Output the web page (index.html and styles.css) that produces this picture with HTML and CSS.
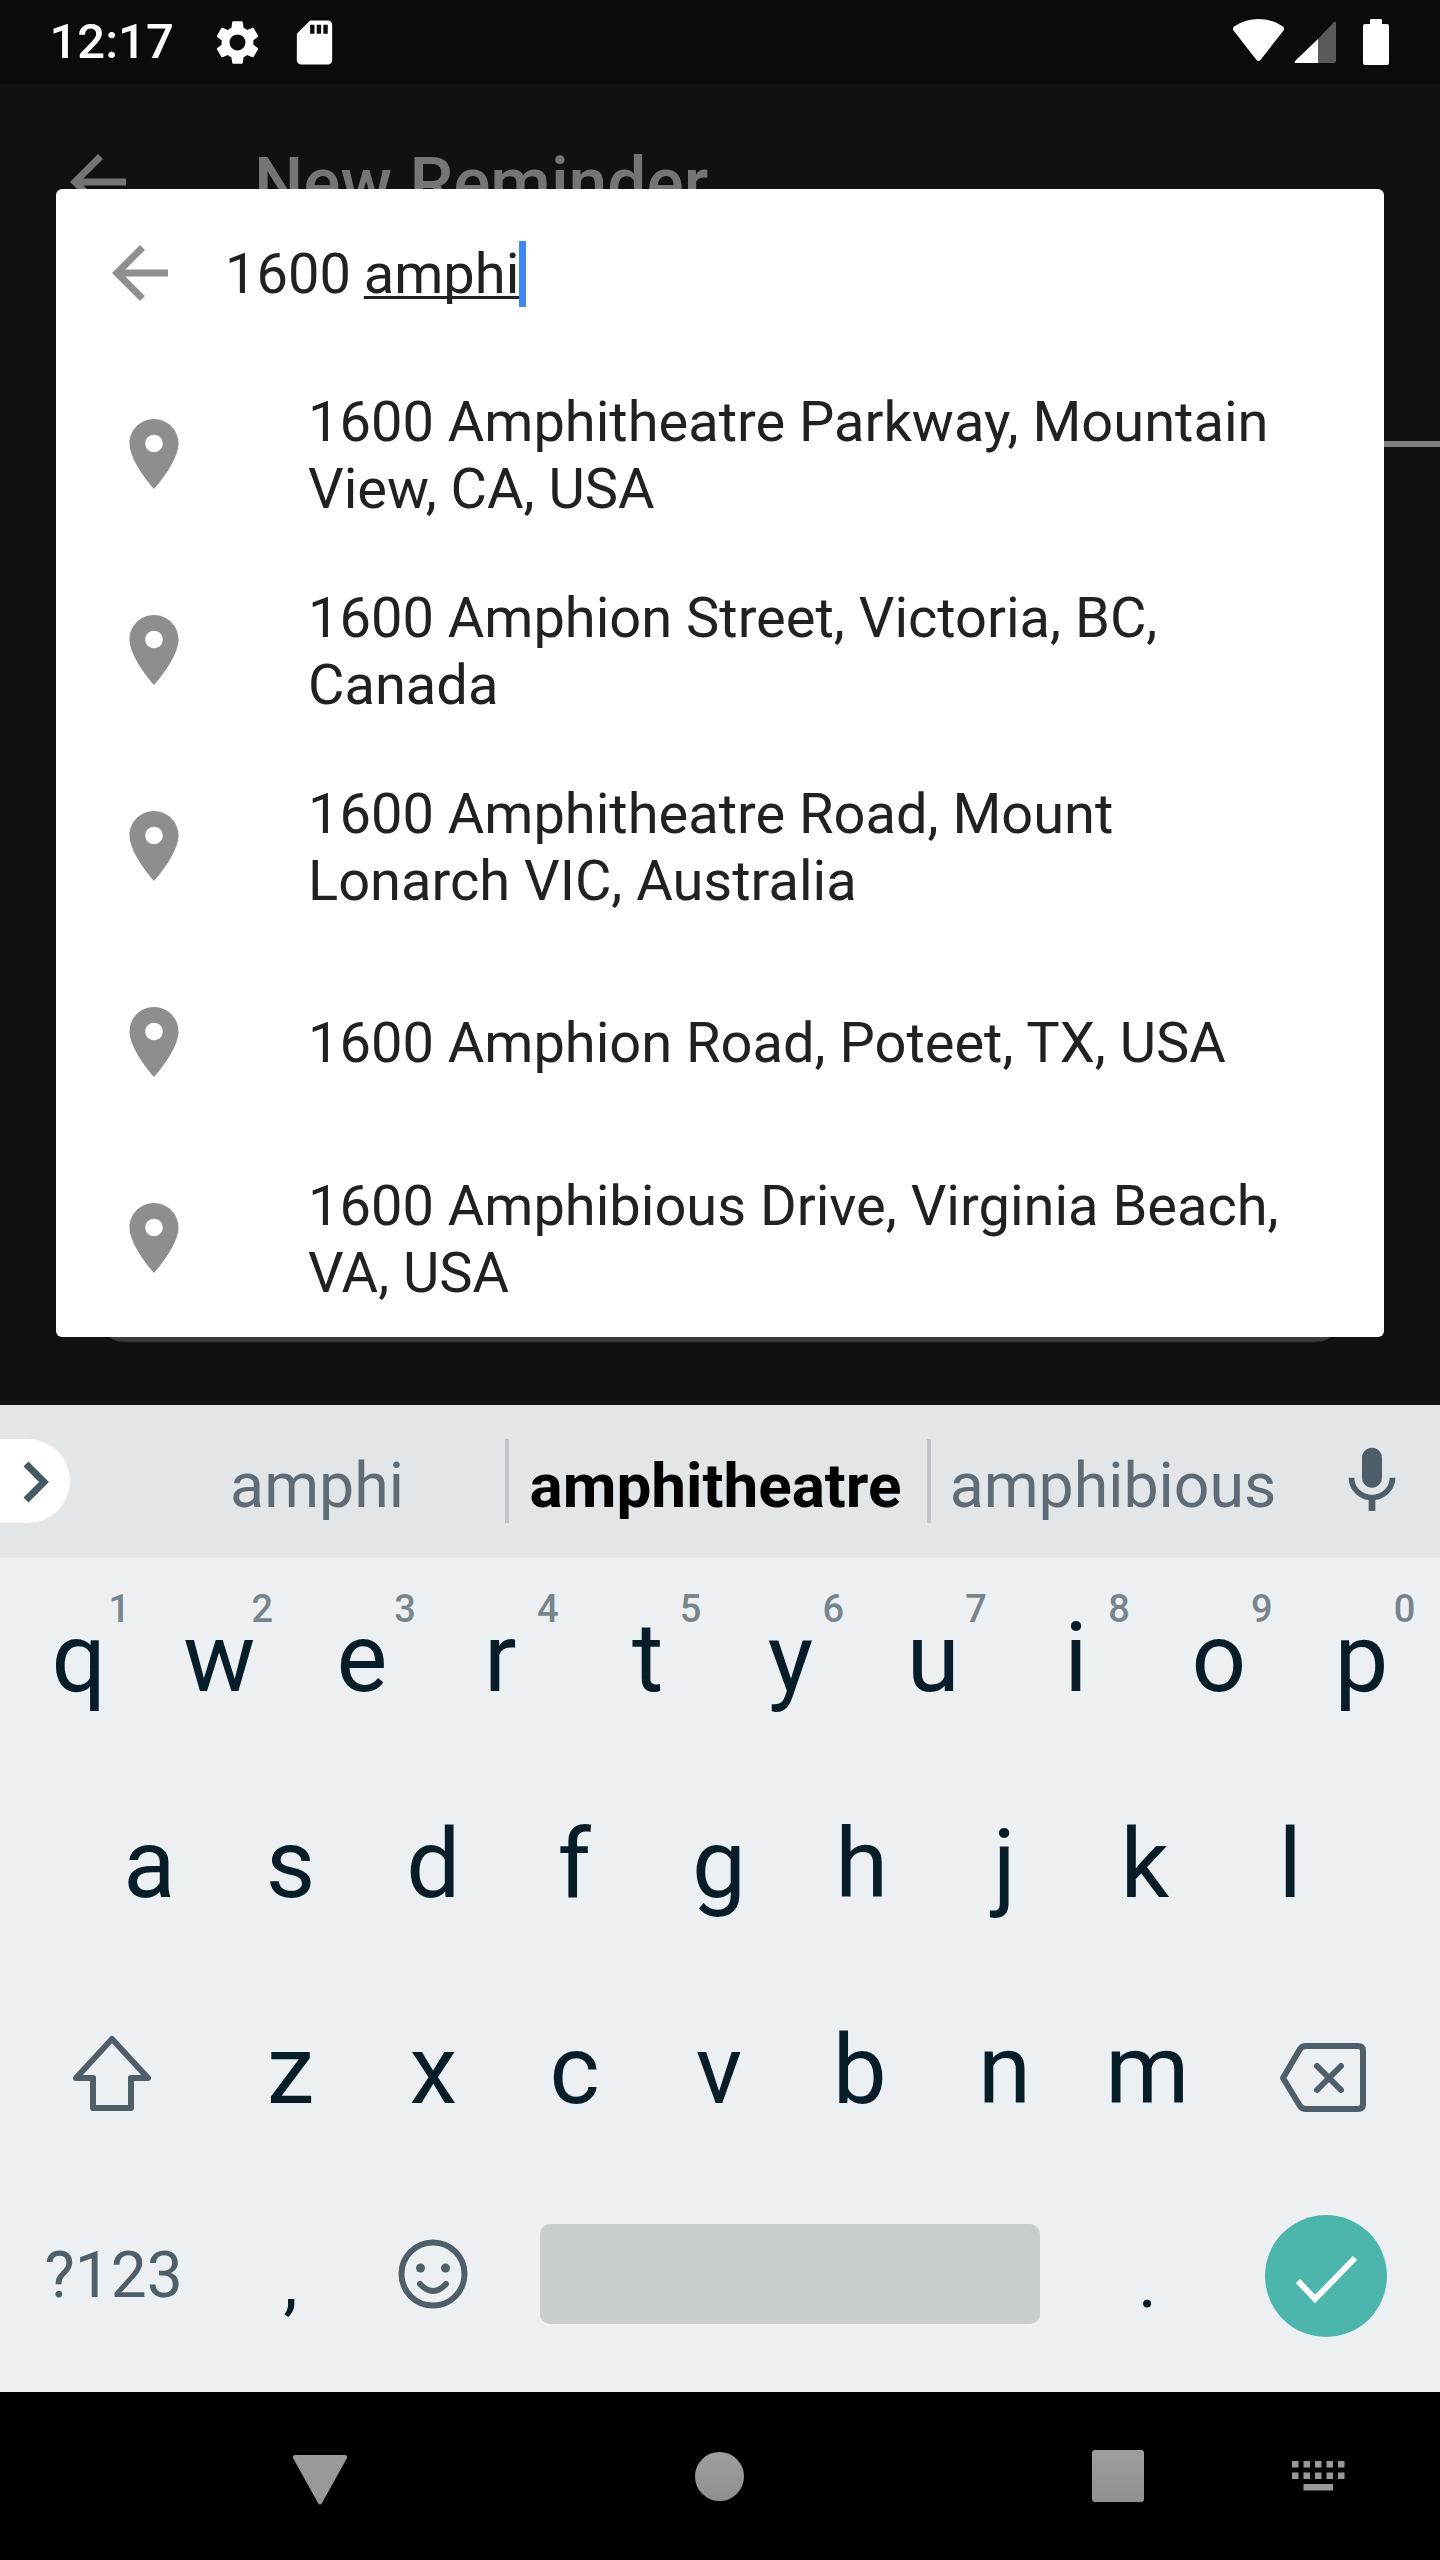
FILE: index.html
```html
<!DOCTYPE html>
<html lang="en">
<head>
<meta charset="UTF-8" />
<title>New Reminder</title>
<link rel="stylesheet" href="styles.css">
</head>
<body>
<div class="screen">

  <div class="statusbar">
    <span class="clock">12:17</span>
    <svg class="status-icon gear" viewBox="0 0 24 24"><path d="M19.14 12.94c.04-.3.06-.61.06-.94 0-.32-.02-.64-.07-.94l2.03-1.58c.18-.14.23-.41.12-.61l-1.92-3.32c-.12-.22-.37-.29-.59-.22l-2.39.96c-.5-.38-1.03-.7-1.62-.94l-.36-2.54c-.04-.24-.24-.41-.48-.41h-3.84c-.24 0-.43.17-.47.41l-.36 2.54c-.59.24-1.13.57-1.62.94l-2.39-.96c-.22-.08-.47 0-.59.22L2.74 8.87c-.12.21-.08.47.12.61l2.03 1.58c-.05.3-.09.63-.09.94s.02.64.07.94l-2.03 1.58c-.18.14-.23.41-.12.61l1.92 3.32c.12.22.37.29.59.22l2.39-.96c.5.38 1.03.7 1.62.94l.36 2.54c.05.24.24.41.48.41h3.84c.24 0 .44-.17.47-.41l.36-2.54c.59-.24 1.13-.56 1.62-.94l2.39.96c.22.08.47 0 .59-.22l1.92-3.32c.12-.22.07-.47-.12-.61l-2.01-1.58zM12 15.6c-1.98 0-3.6-1.62-3.6-3.6s1.62-3.6 3.6-3.6 3.6 1.62 3.6 3.6-1.62 3.6-3.6 3.6z"/></svg>
    <svg class="status-icon sd" viewBox="0 0 24 24"><path d="M18 2h-8L4.02 8 4 20c0 1.1.9 2 2 2h12c1.1 0 2-.9 2-2V4c0-1.1-.9-2-2-2zm-6 6h-2V4h2v4zm3 0h-2V4h2v4zm3 0h-2V4h2v4z"/></svg>
    <div class="status-right">
      <svg class="wifi" viewBox="0 0 53 42"><path d="M1.5 11.5Q0 9 2.5 7.3C10 2.4 18 0 26.5 0S43 2.4 50.500 7.300Q53 9 51.500 11.500L28.500 41Q26.500 43 24.500 41Z"/></svg>
      <svg class="signal" viewBox="0 0 42 42"><path class="signal-off" d="M24 42V18L40 1Q42 0 42 2V40Q42 42 40 42Z"/><path d="M24 18V42H2Q0 42 1 40Z"/></svg>
      <div class="battery"></div>
    </div>
  </div>

  <div class="app">
    <div class="toolbar">
      <svg class="icon-84" viewBox="0 0 24 24"><path d="M20 11H7.830l5.590-5.590L12 4l-8 8 8 8 1.410-1.410L7.830 13H20v-2z"/></svg>
      <span class="toolbar-title">New Reminder</span>
    </div>
    <div class="field-line"></div>
    <div class="form-card"></div>

    <!-- place search overlay -->
    <div class="search-card">
      <div class="search-head">
        <svg class="icon-84 search-back" viewBox="0 0 24 24"><path d="M20 11H7.830l5.590-5.590L12 4l-8 8 8 8 1.410-1.410L7.830 13H20v-2z"/></svg>
        <div class="search-input">1600&nbsp;<span class="composing">amphi</span></div>
        <div class="caret"></div>
      </div>
      <div class="result">
        <svg class="icon-84 pin" viewBox="0 0 24 24"><path d="M12 2C8.130 2 5 5.130 5 9c0 5.250 7 13 7 13s7-7.750 7-13c0-3.870-3.130-7-7-7zm0 9.500c-1.380 0-2.500-1.120-2.500-2.500s1.120-2.500 2.500-2.500 2.500 1.120 2.500 2.500-1.120 2.500-2.500 2.500z"/></svg>
        <div class="result-text">1600 Amphitheatre Parkway, Mountain View, CA, USA</div>
      </div>
      <div class="result">
        <svg class="icon-84 pin" viewBox="0 0 24 24"><path d="M12 2C8.130 2 5 5.130 5 9c0 5.250 7 13 7 13s7-7.750 7-13c0-3.870-3.130-7-7-7zm0 9.500c-1.380 0-2.500-1.120-2.500-2.500s1.120-2.500 2.500-2.500 2.500 1.120 2.500 2.500-1.120 2.500-2.500 2.500z"/></svg>
        <div class="result-text">1600 Amphion Street, Victoria, BC, Canada</div>
      </div>
      <div class="result">
        <svg class="icon-84 pin" viewBox="0 0 24 24"><path d="M12 2C8.130 2 5 5.130 5 9c0 5.250 7 13 7 13s7-7.750 7-13c0-3.870-3.130-7-7-7zm0 9.500c-1.380 0-2.500-1.120-2.500-2.500s1.120-2.500 2.500-2.500 2.500 1.120 2.500 2.500-1.120 2.500-2.500 2.500z"/></svg>
        <div class="result-text">1600 Amphitheatre Road, Mount Lonarch VIC, Australia</div>
      </div>
      <div class="result">
        <svg class="icon-84 pin" viewBox="0 0 24 24"><path d="M12 2C8.130 2 5 5.130 5 9c0 5.250 7 13 7 13s7-7.750 7-13c0-3.870-3.130-7-7-7zm0 9.500c-1.380 0-2.500-1.120-2.500-2.500s1.120-2.500 2.500-2.500 2.500 1.120 2.500 2.500-1.120 2.500-2.500 2.500z"/></svg>
        <div class="result-text">1600 Amphion Road, Poteet, TX, USA</div>
      </div>
      <div class="result">
        <svg class="icon-84 pin" viewBox="0 0 24 24"><path d="M12 2C8.130 2 5 5.130 5 9c0 5.250 7 13 7 13s7-7.750 7-13c0-3.870-3.130-7-7-7zm0 9.500c-1.380 0-2.500-1.120-2.500-2.500s1.120-2.500 2.500-2.500 2.500 1.120 2.500 2.500-1.120 2.500-2.500 2.500z"/></svg>
        <div class="result-text">1600 Amphibious Drive, Virginia Beach, VA, USA</div>
      </div>
    </div>
  </div>

  <div class="suggest-bar">
    <div class="suggest-toggle">
      <svg viewBox="0 0 70 84"><path d="M26 25L44 43L26 61"/></svg>
    </div>
    <div class="suggestion suggestion-first">amphi</div>
    <div class="suggestion suggestion-main">amphitheatre</div>
    <div class="suggestion suggestion-last">amphibious</div>
    <svg class="mic" viewBox="0 0 24 24"><path d="M12 14c1.660 0 2.990-1.340 2.990-3L15 5c0-1.660-1.340-3-3-3S9 3.340 9 5v6c0 1.660 1.340 3 3 3zm5.300-3c0 3-2.540 5.100-5.300 5.100S6.700 14 6.700 11H5c0 3.410 2.720 6.230 6 6.720V21h2v-3.280c3.280-.48 6-3.300 6-6.720h-1.700z"/></svg>
  </div>

  <div class="keyboard">
    <div class="kb-row">
      <div class="key key-q">q<span class="hint">1</span></div>
      <div class="key">w<span class="hint">2</span></div>
      <div class="key">e<span class="hint">3</span></div>
      <div class="key key-r">r<span class="hint">4</span></div>
      <div class="key">t<span class="hint">5</span></div>
      <div class="key">y<span class="hint">6</span></div>
      <div class="key">u<span class="hint">7</span></div>
      <div class="key">i<span class="hint">8</span></div>
      <div class="key">o<span class="hint">9</span></div>
      <div class="key">p<span class="hint">0</span></div>
    </div>
    <div class="kb-row kb-row-center">
      <div class="key key-a">a</div>
      <div class="key">s</div>
      <div class="key">d</div>
      <div class="key key-f">f</div>
      <div class="key">g</div>
      <div class="key">h</div>
      <div class="key">j</div>
      <div class="key key-k">k</div>
      <div class="key">l</div>
    </div>
    <div class="kb-row">
      <div class="key key-wide">
        <svg class="key-icon" viewBox="0 0 84 84"><path d="M42 11L78 50H61V80H23V50H6Z"/></svg>
      </div>
      <div class="key">z</div>
      <div class="key">x</div>
      <div class="key key-c">c</div>
      <div class="key">v</div>
      <div class="key key-b">b</div>
      <div class="key">n</div>
      <div class="key">m</div>
      <div class="key key-wide">
        <svg class="key-icon backspace" viewBox="0 0 96 84"><path d="M5 50L22 21Q24 18 28 18H80Q85 18 85 23V76Q85 81 80 81H28Q24 81 22 78Z"/><path d="M39 38L63 62M63 38L39 62"/></svg>
      </div>
    </div>
    <div class="kb-row">
      <div class="key key-wide key-symbols">?123</div>
      <div class="key key-punct">,</div>
      <div class="key">
        <svg class="key-icon emoji" viewBox="0 0 84 84"><circle cx="42" cy="40" r="31.500"/><circle class="eye" cx="29.500" cy="34" r="4.500"/><circle class="eye" cx="54.500" cy="34" r="4.500"/><path d="M29 50Q42 64 55 50"/></svg>
      </div>
      <div class="key key-space"><div class="space-bar"></div></div>
      <div class="key key-punct">.</div>
      <div class="key key-wide">
        <div class="enter-btn">
          <svg viewBox="0 0 122 122"><path d="M33 66L50 84L90 43"/></svg>
        </div>
      </div>
    </div>
  </div>

  <div class="navbar">
    <svg class="nav-back" viewBox="0 0 56 50"><path d="M3 0H53Q56 0 55 3L30 48Q28 51 26 48L1 3Q0 0 3 0Z"/></svg>
    <div class="nav-home"></div>
    <div class="nav-recent"></div>
    <svg class="nav-kb" viewBox="0 0 53 30">
      <rect x="0" y="0" width="6.500" height="6.500"/><rect x="11.500" y="0" width="6.500" height="6.500"/><rect x="23" y="0" width="6.500" height="6.500"/><rect x="34.500" y="0" width="6.500" height="6.500"/><rect x="46" y="0" width="6.500" height="6.500"/>
      <rect x="0" y="11.500" width="6.500" height="6.500"/><rect x="11.500" y="11.500" width="6.500" height="6.500"/><rect x="23" y="11.500" width="6.500" height="6.500"/><rect x="34.500" y="11.500" width="6.500" height="6.500"/><rect x="46" y="11.500" width="6.500" height="6.500"/>
      <rect x="11.500" y="23" width="29.500" height="6.500"/>
    </svg>
  </div>

</div>
</body>
</html>
```

FILE: styles.css
```css
body { margin: 0; background: #111; font-family: Roboto, "Noto Sans", sans-serif; }
.screen { width: 1440px; height: 2560px; display: flex; flex-direction: column; overflow: hidden; }

/* status bar */
.statusbar { height: 84px; flex: none; background: #0b0b0b; display: flex; align-items: center; color: #fff; fill: #fff; padding: 0 51px 0 49.500px; box-sizing: border-box; }
.clock { font-size: 49px; font-weight: 500; line-height: 84px; width: 121px; }
.status-icon { width: 53px; height: 53px; }
.gear { margin-left: 40.500px; }
.sd { margin-left: 24px; }
.status-right { margin-left: auto; display: flex; align-items: flex-end; height: 46px; }
.wifi { width: 53px; height: 42px; margin-bottom: 4px; }
.signal { width: 42px; height: 42px; margin-left: 9px; margin-bottom: 2px; }
.signal-off { fill: #5b5b5b; }
.battery { width: 26px; height: 41px; margin-left: 27px; background: #fff; border-radius: 2px; position: relative; margin-right: 0; }
.battery::before { content: ""; position: absolute; top: -5px; left: 7px; width: 12px; height: 6px; background: #fff; border-radius: 1px 1px 0 0; }

/* screen behind the overlay */
.app { flex: none; height: 1321px; position: relative; background: #111; }
.icon-84 { width: 84px; height: 84px; flex: none; }
.toolbar { height: 196px; display: flex; align-items: center; padding-left: 56px; fill: #757575; }
.toolbar-title { font-size: 69.500px; font-weight: 500; color: #757575; margin-left: 114px; padding-top: 3px; white-space: nowrap; }
.field-line { height: 6px; margin: 161px 0 0 100px; background: #7f7f7f; }
.form-card { height: 42px; margin: 853px 100px 0 100px; background: #3b3b3b; border-radius: 0 0 24px 24px; }

/* overlay */
.search-card { position: absolute; top: 105px; left: 56px; width: 1328px; height: 1148px; background: #fff; border-radius: 6px; overflow: hidden; color: #212121; font-size: 56px; }
.search-head { height: 167px; box-sizing: border-box; padding: 3px 0 0 42px; display: flex; align-items: center; }
.search-back { fill: #8f8f8f; margin-top: -3px; margin-right: 43px; }
.search-input { line-height: 66px; white-space: nowrap; }
.composing { margin-left: -1px; text-decoration: underline; text-decoration-thickness: 3px; text-underline-offset: 3px; text-decoration-skip-ink: none; }
.caret { width: 7px; height: 66px; background: #4285f4; }
.result { height: 196px; display: flex; align-items: center; padding-left: 56px; }
.pin { fill: #8e8e8e; }
.result-text { margin-left: 112px; padding-top: 3px; width: 1000px; line-height: 67px; }

/* suggestions */
.suggest-bar { height: 153px; flex: none; background: #e2e6e9; display: flex; align-items: center; font-size: 62.600px; color: #5f6c75; }
.suggest-toggle { width: 70px; height: 84px; margin-right: 59px; margin-top: -2px; background: #fff; border-radius: 0 42px 42px 0; flex: none; }
.suggest-toggle svg { display: block; width: 70px; height: 84px; fill: none; stroke: #455a64; stroke-width: 7; }
.suggestion { height: 84px; line-height: 94px; margin-top: -2px; text-align: center; box-sizing: border-box; flex: none; }
.suggestion-first { width: 376px; }
.suggestion-main { width: 426px; padding-right: 5px; font-size: 62px; font-weight: 700; color: #000; border-left: 4px solid #bfc5ca; border-right: 4px solid #bfc5ca; }
.suggestion-last { width: 364px; }
.mic { width: 80px; height: 80px; fill: #4e5f6a; flex: none; margin-left: 37px; margin-top: -2px; }

/* keyboard */
.keyboard { height: 834px; flex: none; background: #ecf0f2; color: #071d28; }
.kb-row { height: 206px; box-sizing: border-box; padding: 0 7px 6px 5px; display: flex; align-items: center; }
.kb-row-center { justify-content: center; }
.key { flex: 0 0 142.800px; height: 100%; box-sizing: border-box; position: relative; display: flex; align-items: center; justify-content: center; font-size: 96px; line-height: 1; }
.key-wide { flex-basis: 214.200px; }
.key-q { padding-left: 5px; }
.key-a { padding-left: 3px; }
.key-r { padding-right: 9px; }
.key-f { padding-right: 4px; }
.key-k { padding-right: 5px; }
.key-c { padding-right: 3px; }
.key-b { padding-right: 4px; }
.hint { position: absolute; top: 32px; left: calc(50% + 43px); transform: translateX(-50%); font-size: 38px; line-height: 38px; font-weight: 500; color: #78858c; }
.key-symbols { font-size: 64px; padding-left: 3px; color: #4f5f69; }
.key-punct { font-size: 72px; padding-top: 14px; }
.key-icon { width: 84px; height: 84px; fill: none; stroke: #4f5f69; stroke-width: 6; stroke-linejoin: round; stroke-linecap: round; }
.backspace { width: 96px; }
.eye { fill: #4f5f69; stroke: none; }
.key-space { flex-basis: 571.200px; }
.space-bar { width: 500px; height: 100px; margin-top: -4px; background: #c8cdd0; border-radius: 10px; }
.enter-btn { width: 122px; height: 122px; border-radius: 50%; background: #4db6ac; }
.enter-btn svg { display: block; width: 122px; height: 122px; fill: none; stroke: #fff; stroke-width: 6; }

/* nav bar */
.navbar { height: 168px; flex: 1; background: #000; display: flex; align-items: center; padding-left: 291.500px; fill: #999; }
.nav-back { width: 56px; height: 50px; margin-top: 8px; }
.nav-home { width: 49px; height: 49px; border-radius: 50%; background: linear-gradient(#9e9e9e, #909090); margin-left: 347px; }
.nav-recent { width: 52px; height: 52px; border-radius: 3px; background: linear-gradient(#9e9e9e, #909090); margin-left: 348px; }
.nav-kb { width: 53px; height: 30px; margin-left: 148px; }
```
